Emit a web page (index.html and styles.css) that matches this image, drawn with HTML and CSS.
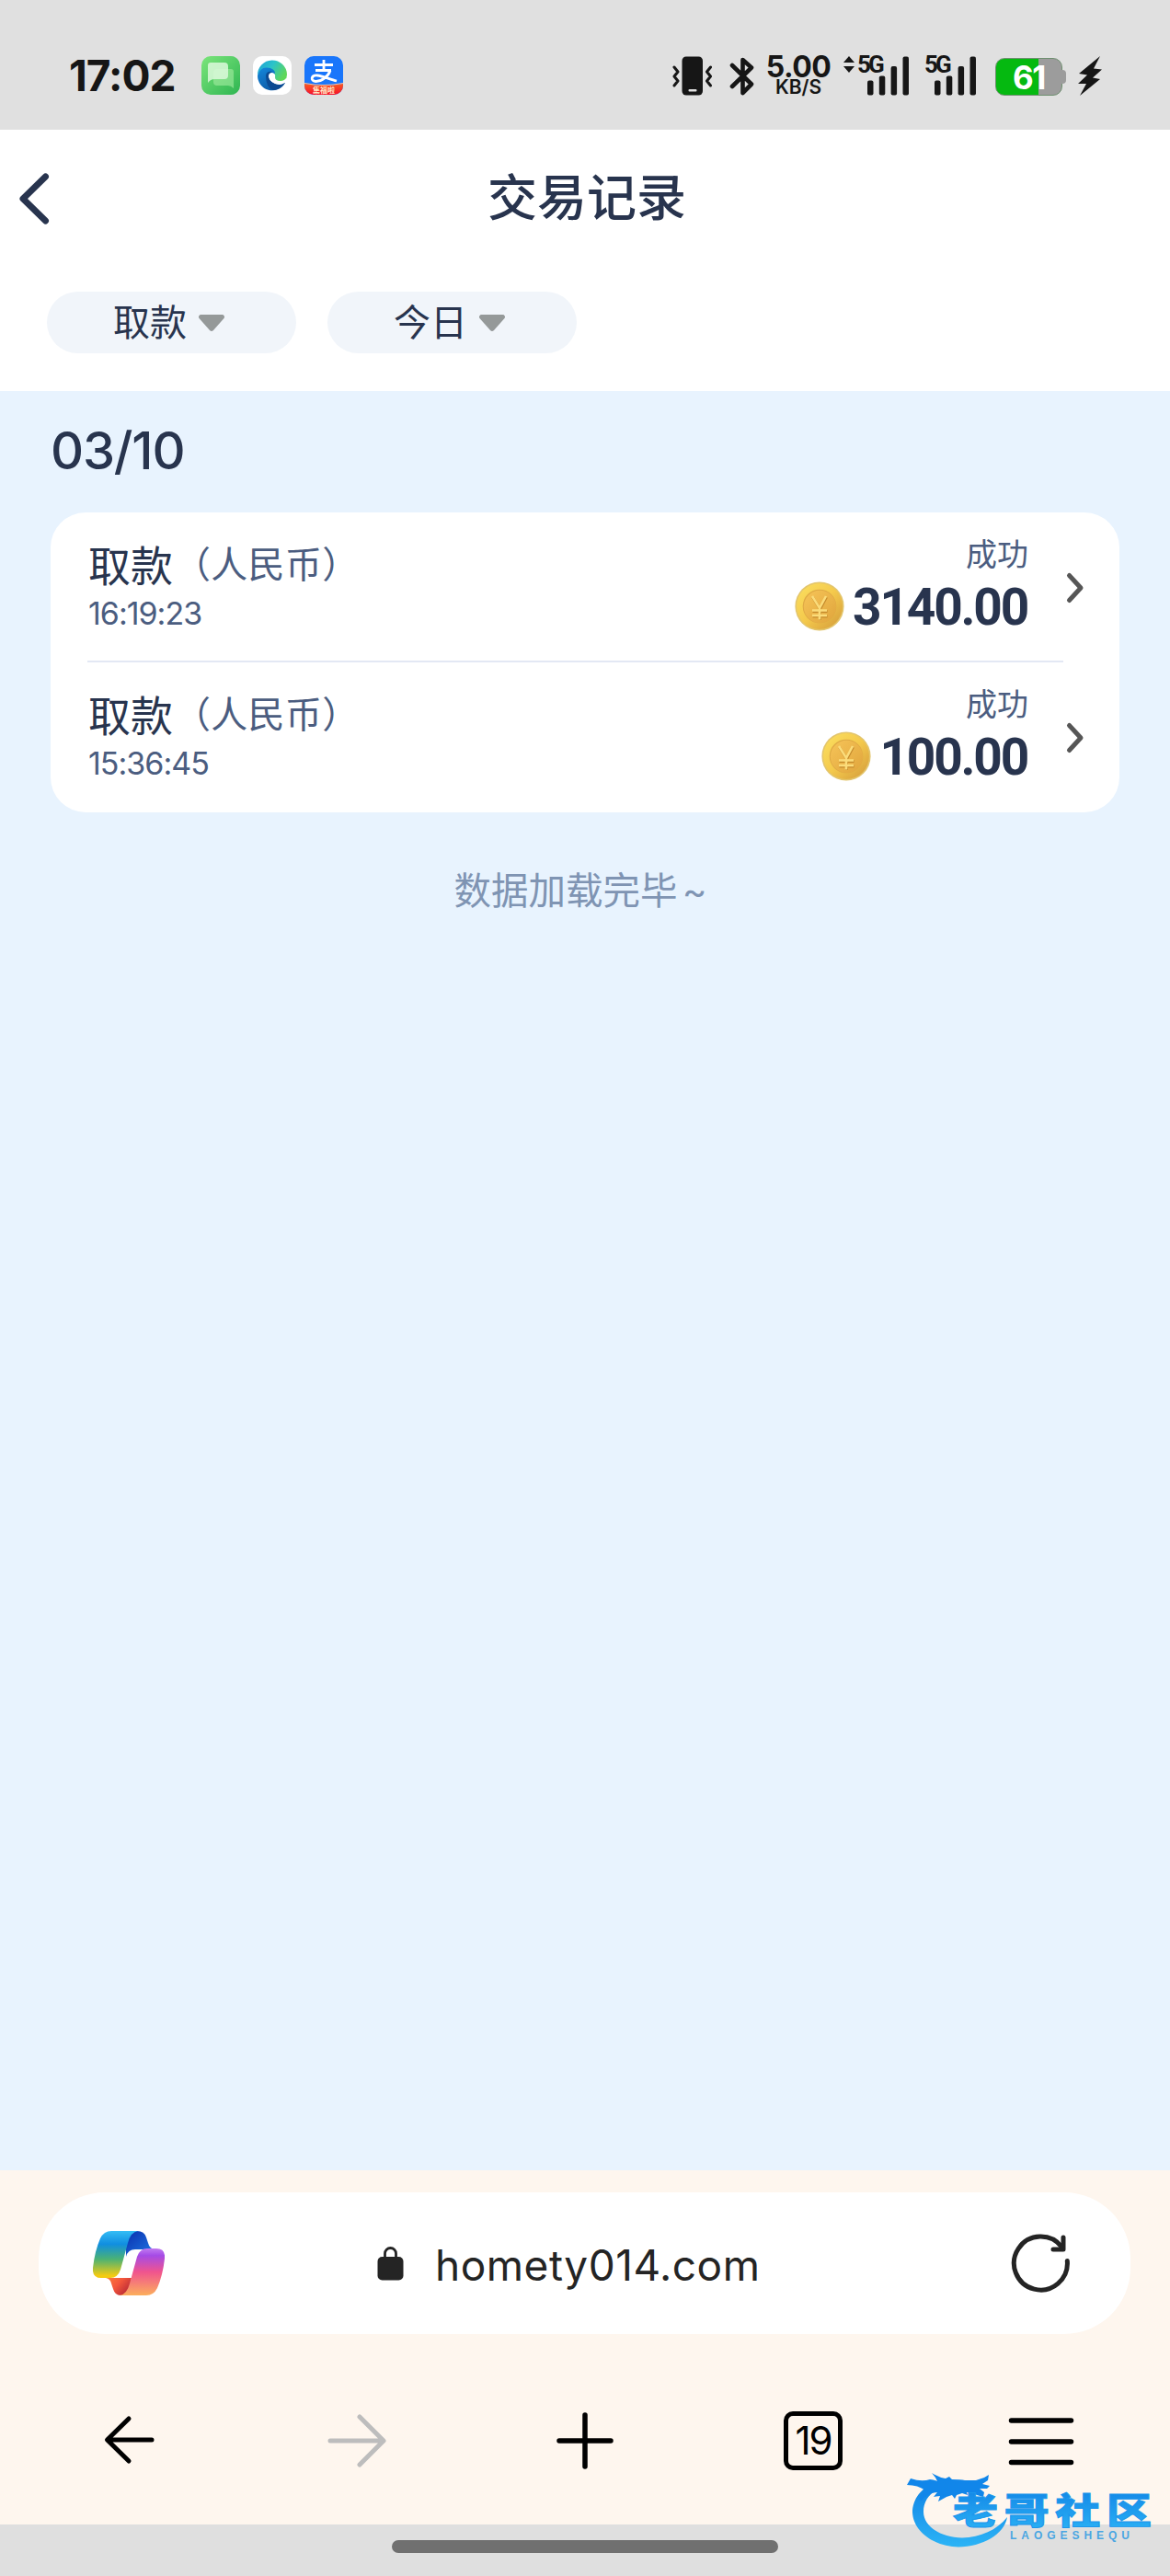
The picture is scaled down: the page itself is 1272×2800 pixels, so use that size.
FILE: index.html
```html
<!DOCTYPE html>
<html lang="zh-CN">
<head>
<meta charset="utf-8">
<title>交易记录</title>
<link rel="stylesheet" href="styles.css">
</head>
<body>
<svg class="defs" width="0" height="0" aria-hidden="true">
  <defs>
    <linearGradient id="msg" x1="0" y1="0" x2="1" y2="1"><stop offset="0" stop-color="#7be57b"/><stop offset="1" stop-color="#2fb552"/></linearGradient>
    <linearGradient id="edgeTop" x1="0" y1="0" x2="1" y2="0.5"><stop offset="0" stop-color="#1c9fd8"/><stop offset=".5" stop-color="#2bc3c9"/><stop offset="1" stop-color="#5fd75a"/></linearGradient>
    <linearGradient id="edgeLow" x1="0" y1="0" x2="0.6" y2="1"><stop offset="0" stop-color="#1488dc"/><stop offset="1" stop-color="#0c59a4"/></linearGradient>
    <linearGradient id="red" x1="0" y1="0" x2="0" y2="1"><stop offset="0" stop-color="#fb5a20"/><stop offset="1" stop-color="#f5102c"/></linearGradient>
    <linearGradient id="gold" x1="0" y1="0" x2="1" y2="1"><stop offset="0" stop-color="#fbe060"/><stop offset=".5" stop-color="#f4c94c"/><stop offset="1" stop-color="#d2993a"/></linearGradient>
    <linearGradient id="goldIn" x1="0" y1="0" x2="1" y2="1"><stop offset="0" stop-color="#f6c458"/><stop offset="1" stop-color="#e0a53c"/></linearGradient>
    <linearGradient id="cpA" x1="0" y1="0" x2="0" y2="1"><stop offset="0" stop-color="#35bdf5"/><stop offset=".28" stop-color="#108ee0"/><stop offset=".6" stop-color="#4bb274"/><stop offset=".95" stop-color="#f3cb12"/></linearGradient>
    <linearGradient id="cpB" x1="0" y1="0" x2="0" y2="1"><stop offset="0" stop-color="#c07af0"/><stop offset=".15" stop-color="#a54be6"/><stop offset=".5" stop-color="#f0548e"/><stop offset="1" stop-color="#fcae5c"/></linearGradient>
    <linearGradient id="cpC" x1="0" y1="0" x2="1" y2="1"><stop offset="0" stop-color="#0a2fae"/><stop offset="1" stop-color="#1f7be6"/></linearGradient>
    <linearGradient id="cpD" x1="0" y1="0" x2="1" y2=".6"><stop offset="0" stop-color="#fb7b3c"/><stop offset=".5" stop-color="#f4573c"/><stop offset="1" stop-color="#b92a36"/></linearGradient>
    <linearGradient id="dragon" x1="0" y1="0" x2="0" y2="1"><stop offset="0" stop-color="#0f80e4"/><stop offset="1" stop-color="#2cb4f6"/></linearGradient>
    <symbol id="coin" viewBox="0 0 54 54">
      <circle cx="27" cy="27" r="26.600" fill="#e3c56c"/>
      <circle cx="27" cy="27" r="25" fill="url(#gold)"/>
      <circle cx="27" cy="27" r="18.300" fill="#dfa944"/>
      <circle cx="27.400" cy="27.400" r="17.600" fill="url(#goldIn)"/>
      <path d="M19.500 17l8 13 7-13M19.500 32.500h16M19.500 38h16M27.500 31v11" fill="none" stroke="#c48a2c" stroke-width="3"/>
      <path d="M19 16l8 13 7-13M19 31.500h16M19 37h16M27 29v12.500" fill="none" stroke="#fbdc7a" stroke-width="2.600"/>
    </symbol>
    <symbol id="next" viewBox="0 0 24 36"><path d="M4.500 4.500L17 18 4.500 31.500" fill="none" stroke="#565656" stroke-width="5" stroke-linecap="round" stroke-linejoin="round"/></symbol>
    <symbol id="drop" viewBox="0 0 30 20"><path d="M3.500 1h23a2.500 2.500 0 0 1 2 4L17 18a2.800 2.800 0 0 1-4 0L1.500 5a2.500 2.500 0 0 1 2-4z" fill="#959999"/></symbol>
    <symbol id="bars" viewBox="0 0 46 43"><g fill="#161616"><rect x="0" y="26.500" width="6.500" height="16" rx="2"/><rect x="12.800" y="21.500" width="6.500" height="21" rx="2"/><rect x="25.600" y="11" width="6.500" height="31.500" rx="2"/><rect x="38.500" y="0.500" width="6.500" height="42" rx="2"/></g></symbol>
  </defs>
</svg>

<header class="status">
  <span class="clock">17:02</span>
  <div class="apps">
    <svg width="42" height="42" viewBox="0 0 42 42"><rect width="42" height="42" rx="10" fill="url(#msg)"/><path d="M17 14h15q3 0 3 3v18q-3-3-6-3H17q-4 0-4-4V18q0-4 4-4z" fill="#a5eda2" opacity=".6"/><path d="M10 7h15q4 0 4 4v10q0 4-4 4H14q-4 0-7 4V10q0-3 3-3z" fill="#dcf9da" opacity=".85"/></svg>
    <svg width="42" height="42" viewBox="0 0 42 42"><rect width="42" height="42" rx="10" fill="#fff"/><path d="M5 21A16 16 0 0 1 37 20Q37 28 28 28 22 28 23 24 24 14 15 13 8 14 5 21z" fill="url(#edgeTop)"/><path d="M5 21Q8 12 15 12.500 24 13 24 19 17 18 17 24 18 31 27 32 31 32 35 29A16 16 0 0 1 5 21z" fill="url(#edgeLow)"/><path d="M14 21Q14 34 22 37 31 36 35 29 29 32 24 30 17 27 17 21 18 18 21 17 15 16 14 21z" fill="#0b4a92"/><path d="M17 22Q17 18 21 18 25 19 24 23 24 27 30 27 34 27 36 24 36 30 29 31 19 30 17 22z" fill="#fff"/></svg>
    <svg width="42" height="42" viewBox="0 0 42 42"><defs><clipPath id="tile"><rect width="42" height="42" rx="10"/></clipPath></defs><g clip-path="url(#tile)"><rect width="42" height="42" fill="#1976fb"/><path d="M11 9.500h20M21 4v12M12 15.500h17M28 15.500C26 22 19 27.500 12.500 27.500 6 27 7 20.500 14 21c6 .5 14 4.500 21 6" fill="none" stroke="#fff" stroke-width="2.800"/><path d="M0 30q21 4 42 0v12H0z" fill="url(#red)"/><path d="M0 29.500q21 4 42 0" fill="none" stroke="#ffc4a0" stroke-width="1.200"/><text x="21" y="39.500" class="tile-text" text-anchor="middle">集福啦</text></g></svg>
  </div>
  <div class="signals">
    <svg class="vibrate" width="44" height="43" viewBox="0 0 44 43"><rect x="10.500" y=".5" width="22.500" height="42" rx="4.500" fill="#161616"/><rect x="17.500" y="36" width="9" height="2.600" rx="1" fill="#e0e0e0"/><path d="M2 12l4 5-4 5 4 5-4 5M41.500 12l-4 5 4 5-4 5 4 5" fill="none" stroke="#161616" stroke-width="3" stroke-linecap="round" stroke-linejoin="round"/></svg>
    <svg class="bluetooth" width="28" height="44" viewBox="0 0 28 44"><path d="M3 10l21 20.500-9.500 9.500V4L24 12.500 3 33" fill="none" stroke="#161616" stroke-width="4.600" stroke-linecap="round" stroke-linejoin="round"/></svg>
    <div class="speed"><b>5.00</b><span>KB/S</span></div>
    <svg class="updown" width="12" height="18" viewBox="0 0 12 18"><path d="M6 0l6 7H0zM6 18l6-7H0z" fill="#161616"/></svg>
    <div class="cell"><span>5G</span><svg width="46" height="43"><use href="#bars"/></svg></div>
    <div class="cell second"><span>5G</span><svg width="46" height="43"><use href="#bars"/></svg></div>
    <div class="battery"><span>61</span></div>
    <svg class="bolt" width="26" height="43" viewBox="0 0 26 43"><path d="M24 0L1 19l9 1.500L0 30l9 0-7 13L24 25l-8-1.500L26 14.500l-9-1z" fill="#161616"/></svg>
  </div>
</header>

<div class="top">
  <div class="title-bar">
    <svg width="36" height="60" viewBox="0 0 36 60"><path d="M30.500 6L6 30l24.500 24" fill="none" stroke="#28344e" stroke-width="7" stroke-linecap="round" stroke-linejoin="round"/></svg>
    <h1>交易记录</h1>
  </div>
  <div class="filters">
    <div class="chip"><span>取款</span><svg width="30" height="20"><use href="#drop"/></svg></div>
    <div class="chip"><span>今日</span><svg width="30" height="20"><use href="#drop"/></svg></div>
  </div>
</div>

<main>
  <h2>03/10</h2>
  <section class="card">
    <div class="row">
      <div class="what"><p class="kind">取款<span>（人民币）</span></p><p class="time">16:19:23</p></div>
      <div class="sum"><p class="state">成功</p><p class="amount"><svg width="54" height="54"><use href="#coin"/></svg><b>3140.00</b></p></div>
      <svg class="go" width="24" height="36"><use href="#next" width="24" height="36"/></svg>
    </div>
    <div class="row">
      <div class="what"><p class="kind">取款<span>（人民币）</span></p><p class="time">15:36:45</p></div>
      <div class="sum"><p class="state">成功</p><p class="amount"><svg width="54" height="54"><use href="#coin"/></svg><b>100.00</b></p></div>
      <svg class="go" width="24" height="36"><use href="#next" width="24" height="36"/></svg>
    </div>
  </section>
  <p class="end">数据加载完毕 ~</p>
</main>

<footer class="browser">
  <div class="url-bar">
    <svg class="copilot" width="78" height="70" viewBox="0 0 78 70">
      <path d="M36 0h12q8 0 10 7l2 6q1.500 6 7 7H46q-8 0-10 8z" fill="url(#cpC)"/>
      <path d="M14 51h28l-3 19H30q-6 0-8-7l-2-6q-1-5-6-6z" fill="url(#cpD)"/>
      <path d="M20 0h29q-8 1-11 13l-8 29q-3 9-11 9H9q-10 0-9-11Q2 22 8 8 12 0 20 0z" fill="url(#cpA)"/>
      <path d="M58 70H29q8-1 11-13l8-29q3-9 11-9h10q10 0 9 11-2 18-8 32-4 8-12 8z" fill="url(#cpB)"/>
    </svg>
    <div class="address">
      <svg width="29" height="37" viewBox="0 0 29 37"><rect x=".5" y="11" width="28" height="25.500" rx="5" fill="#242424"/><path d="M8.500 13V7.500a6 6 0 0 1 12 0V13" fill="none" stroke="#242424" stroke-width="2.800"/></svg>
      <span>homety014.com</span>
    </div>
    <svg class="reload" width="66" height="66" viewBox="0 0 66 66"><path d="M61.300 30.500A29 29 0 1 1 55.500 15.500" fill="none" stroke="#242424" stroke-width="5" stroke-linecap="round"/><path d="M57 5v13H46" fill="none" stroke="#242424" stroke-width="5" stroke-linecap="round" stroke-linejoin="round"/></svg>
  </div>
  <nav class="tools">
    <span><svg width="64" height="64" viewBox="0 0 64 64"><path d="M57 31H9M32 8L8.500 31 32 54" fill="none" stroke="#000" stroke-width="5" stroke-linecap="round" stroke-linejoin="round"/></svg></span>
    <span><svg width="64" height="64" viewBox="0 0 64 64"><path d="M3 32h57M35 6l26 26-26 26" fill="none" stroke="#bdbdbd" stroke-width="5" stroke-linecap="round" stroke-linejoin="round"/></svg></span>
    <span><svg width="64" height="64" viewBox="0 0 64 64"><path d="M32 4v56M4 32h56" fill="none" stroke="#000" stroke-width="5.500" stroke-linecap="round"/></svg></span>
    <span><b class="tabs">19</b></span>
    <span><svg width="72" height="64" viewBox="0 0 72 64"><path d="M3.500 10h65M3.500 33h65M3.500 55.500h65" fill="none" stroke="#000" stroke-width="5.500" stroke-linecap="round"/></svg></span>
  </nav>
</footer>
<div class="gesture"><i></i></div>

<svg class="watermark" width="272" height="90" viewBox="0 0 272 90">
  <path d="M34 15C16 21 6 34 6 49 7 70 30 86 56 86.500 82 86 106 73 109 54 98 68 80 76 60 76.500 36 76 18 64 18 48 18 34 28 24 42 21z" fill="url(#dragon)"/>
  <path d="M4 12q12 4 21 1 4 0 8 2l-2-4-4-5q8 5 15 6l4-2 3 3q9 0 14 1l12 0 9-3 5-3-1 6-6 4 8 2-3 3-8 0 5 4-1 5-7-2-6-3-5 0 1 3-6-2-6 2-2 4-3-4-6 2-9 5 2-6-7 1 4-5q-11 1-17 9-7-1 4-11-8-6-20-6z" fill="#1186ea"/>
  <text class="mark" x="50" y="0" textLength="216" transform="translate(0 61) scale(1 .79)">老哥社区</text>
  <text x="112" y="78" class="latin" textLength="130">LAOGESHEQU</text>
</svg>
</body>
</html>
```
FILE: styles.css
```css
* { box-sizing: border-box; margin: 0; padding: 0; }
body {
  width: 1272px;
  height: 2800px;
  position: relative;
  display: flex;
  flex-direction: column;
  overflow: hidden;
  font-family: Inter, "Noto Sans CJK SC", sans-serif;
  color: #28344e;
  background: #e8f3fe;
}
svg { display: block; flex: none; }
.defs { position: absolute; }

.status {
  height: 141px;
  flex: none;
  display: flex;
  align-items: flex-start;
  padding: 61px 0 0 75px;
  background: #e0e0e0;
  color: #161616;
}
.clock { width: 144px; font-size: 46px; line-height: 42px; font-weight: 700; letter-spacing: -1px; }
.apps { display: flex; gap: 14px; }
.tile-text { font: 700 8px "Noto Sans CJK SC", sans-serif; fill: #ffe9c8; }
.signals { display: flex; align-items: flex-start; margin-left: 358px; }
.bluetooth { margin-left: 18px; }
.speed { width: 72px; margin-left: 11px; display: flex; flex-direction: column; align-items: center; white-space: nowrap; }
.speed b { font-size: 32px; line-height: 23px; font-weight: 700; letter-spacing: -.5px; }
.speed span { font-size: 21px; line-height: 22px; font-weight: 600; }
.updown { margin-left: 13px; }
.cell { display: flex; margin-left: 3px; }
.cell span { width: 28px; font: 700 26px/19px Roboto, sans-serif; letter-spacing: -3px; }
.cell svg { margin-left: -17px; }
.cell.second { margin-left: 16px; }
.battery {
  position: relative;
  width: 73px; height: 41px; margin: 2px 0 0 20px;
  border: 1px solid #6f8f70;
  border-radius: 10px;
  background: linear-gradient(90deg, #05b910 46px, #9c9c9c 46px);
  color: #fff;
  font-size: 35px; line-height: 40px; font-weight: 700;
  text-align: center; letter-spacing: -1.500px;
}
.battery::after { content: ""; position: absolute; left: 71px; top: 12px; width: 5px; height: 15px; border-radius: 0 4px 4px 0; background: #9c9c9c; }
.bolt { margin-left: 17px; }

.top { height: 284px; flex: none; background: #fff; }
.title-bar { height: 150px; display: grid; grid-template-columns: 200px 1fr 200px; align-items: center; padding-left: 19px; padding-right: 19px; }
.title-bar h1 { text-align: center; font-size: 54px; line-height: 60px; font-weight: 500; margin-left: 4px; }
.filters { display: flex; gap: 34px; margin: 26px 0 0 51px; }
.chip { width: 271px; height: 67px; border-radius: 34px; background: #f1f5fa; display: flex; align-items: center; padding-left: 72px; gap: 12px; font-size: 40px; line-height: 60px; }

main { height: 1934px; flex: none; padding: 32px 55px 0; }
h2 { font-size: 56px; line-height: 66px; font-weight: 500; letter-spacing: -1.200px; }
.card { margin-top: 34px; height: 326px; border-radius: 38px; background: #fff; padding: 0 32px 0 40px; }
.row { height: 163px; display: flex; position: relative; }
.row + .row::before { content: ""; position: absolute; left: 0; top: -2px; width: 1061px; height: 2px; background: #e3e8f4; }
.what { flex: 1; padding: 30px 0 0 1px; }
.kind { display: flex; align-items: flex-start; font-size: 46px; line-height: 56px; }
.kind span { font-size: 40px; line-height: 54px; letter-spacing: .3px; margin-left: 1px; color: #4b5d80; }
.time { font-size: 34px; line-height: 40px; letter-spacing: -1px; margin-top: 4px; color: #4b5d80; }
.sum { padding-top: 22px; display: flex; flex-direction: column; align-items: flex-end; }
.state { font-size: 34px; line-height: 48px; margin-right: -1px; color: #4b5d80; }
.amount { display: flex; align-items: center; gap: 9px; margin-top: 3px; }
.amount b { font: 700 55px/54px Roboto, sans-serif; letter-spacing: -2.200px; padding-top: 3px; }
.go { margin: 64px 3px 0 41px; }
.end { margin: 56px 0 0 -10px; font-size: 40.500px; line-height: 60px; text-align: center; word-spacing: -6px; color: #7f94b3; }

.browser { height: 385px; flex: none; padding: 24px 43px 0 42px; background: #fef6ee; }
.url-bar { height: 154px; border-radius: 72px; background: #fff; display: flex; align-items: center; padding: 0 64px 0 59px; }
.address { flex: 1; display: flex; align-items: center; gap: 34px; padding-left: 231px; font-size: 46px; line-height: 60px; color: #242424; }
.address span { padding-top: 3px; white-space: nowrap; letter-spacing: .5px; }
.tools { height: 64px; margin: 84px -20px 0 -26px; display: grid; grid-template-columns: repeat(5, 248px); }
.tools span { display: flex; justify-content: center; align-items: center; }
.tabs { width: 64px; height: 64px; border: 5px solid #000; border-radius: 10px; font-size: 42px; line-height: 54px; font-weight: 400; text-align: center; letter-spacing: -2px; color: #000; }
.gesture { flex: 1; background: #dfdfdf; padding: 17px 0 0 426px; }
.gesture i { display: block; width: 420px; height: 14px; border-radius: 7px; background: #707070; }

.watermark { position: absolute; left: 986px; top: 2682px; overflow: visible; }
.mark { font: 900 49px "Noto Sans CJK SC", sans-serif; fill: url(#dragon); stroke: #1c96ec; stroke-width: 1.200px; }
.latin { font: 700 12px "Liberation Sans", sans-serif; fill: #4aa6e2; }
```
